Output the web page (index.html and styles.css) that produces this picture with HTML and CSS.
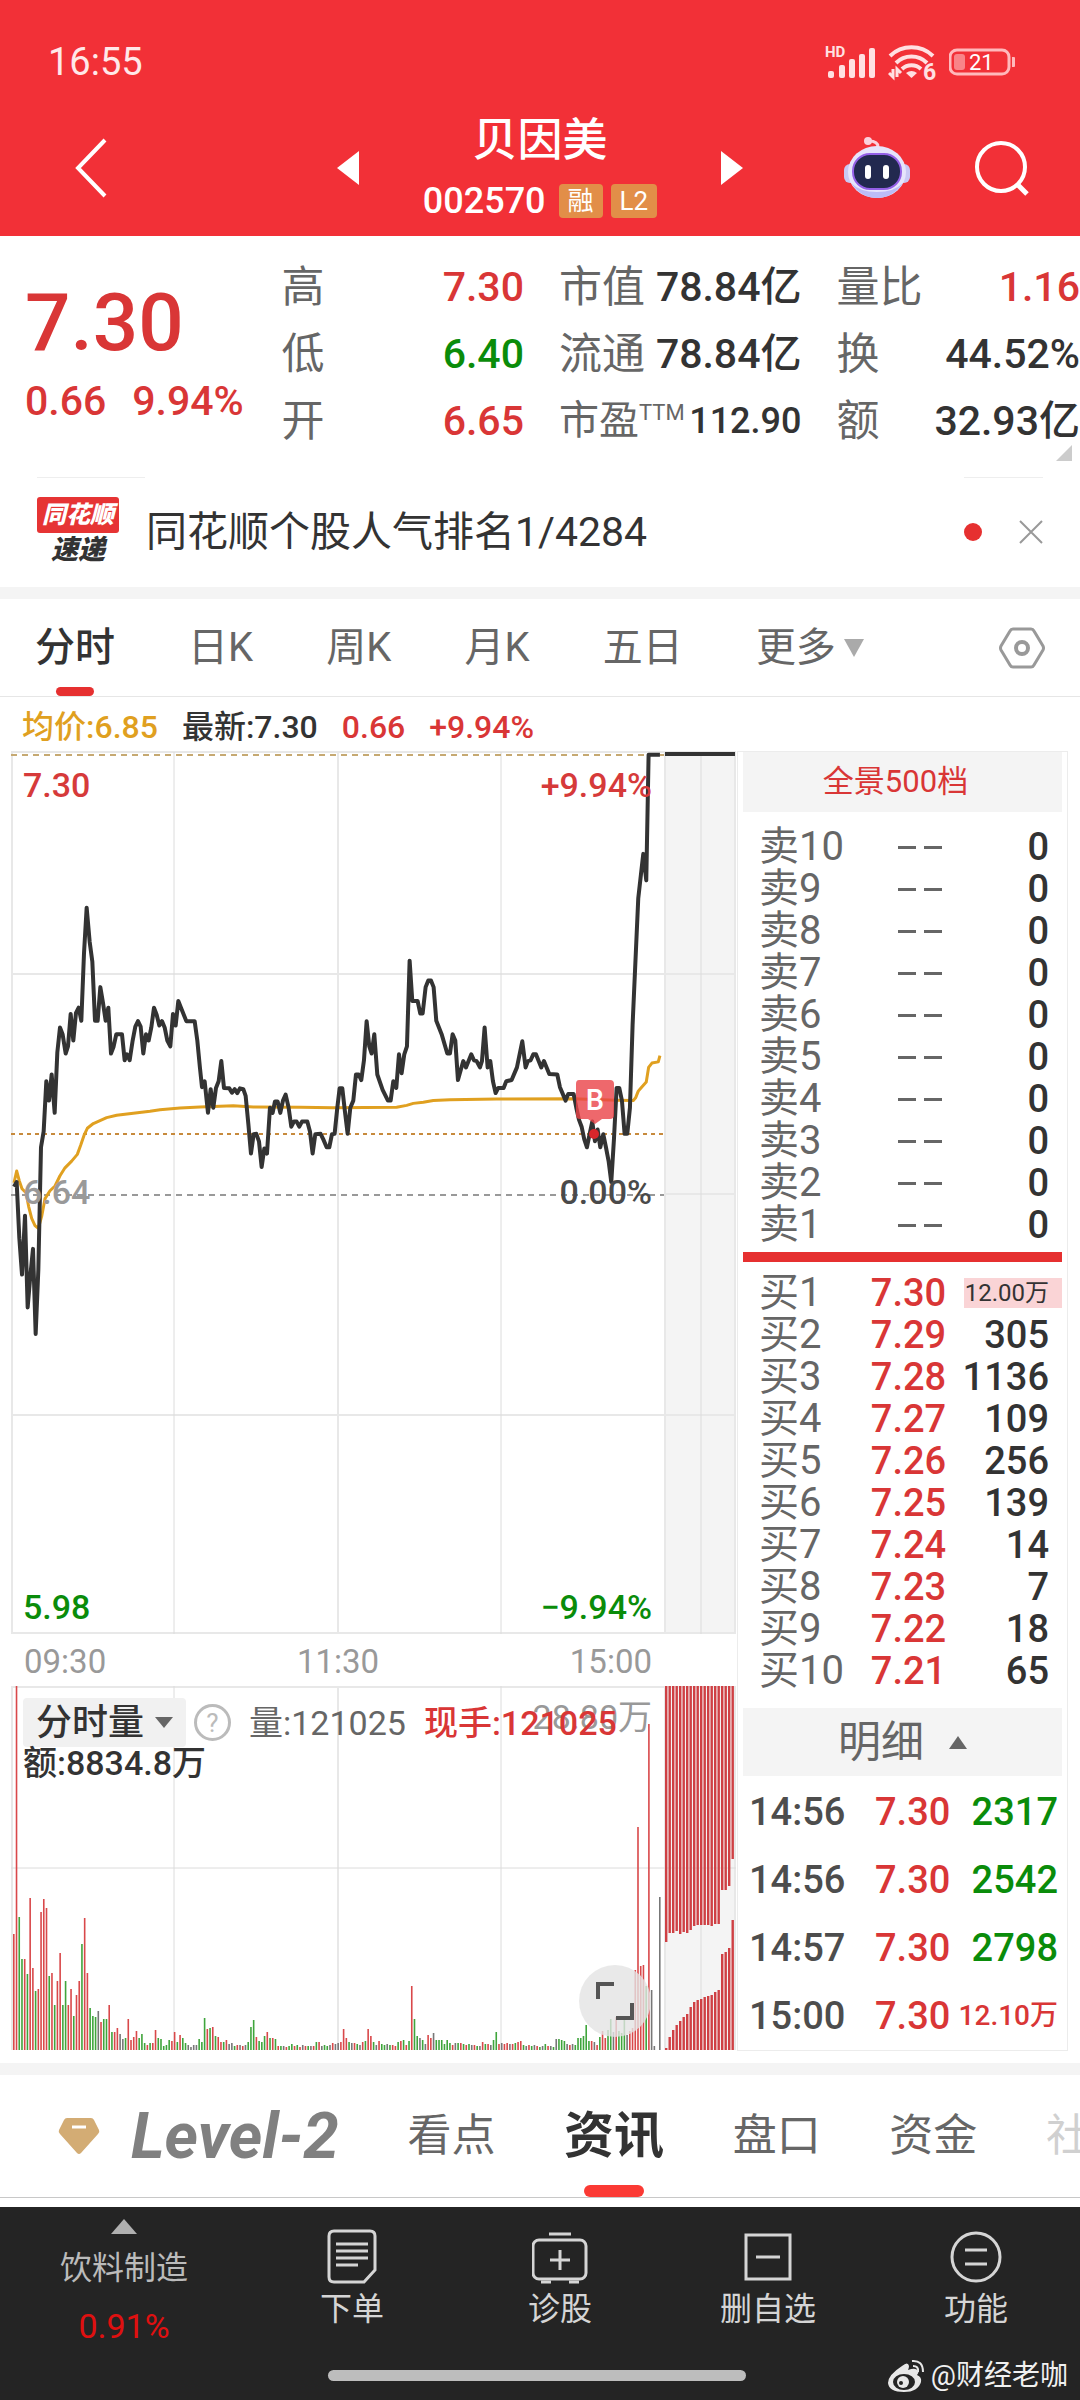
FILE: index.html
```html
<!DOCTYPE html>
<html lang="zh-CN">
<head>
    <meta charset="UTF-8">
    <meta name="viewport" content="width=device-width, initial-scale=1.0">
    <title>贝因美 002570</title>
    <link rel="stylesheet" href="styles.css">
</head>
<body>
    <header class="top">
        <div class="status-bar">
            <span class="clock">16:55</span>
            <div class="status-icons">
                <svg width="52" height="44" viewBox="0 -5 52 44" fill="#ffe0e2">
                    <text x="0" y="12" font-size="15" font-weight="700">HD</text>
                    <rect x="3" y="26" width="6" height="7" rx="2"/>
                    <rect x="14" y="20" width="6" height="13" rx="2"/>
                    <rect x="24" y="14" width="6" height="19" rx="2"/>
                    <rect x="34" y="9" width="6" height="24" rx="2"/>
                    <rect x="44" y="3" width="6" height="30" rx="2"/>
                </svg>
                <svg width="50" height="52" viewBox="0 -6 50 52" fill="none" stroke="#ffe0e2" stroke-width="4">
                    <path d="M2 14a31 31 0 0 1 43 0M8 21a22 22 0 0 1 31 0M14 27a14 14 0 0 1 19 0"/>
                    <path d="M18 31q5.500-4 11 0l-5.500 5z" fill="#ffe0e2" stroke="none"/>
                    <path d="M1 31l4 4v-8M9 35v-8l4 4" stroke-width="3"/>
                    <text x="35" y="38" font-size="23" font-weight="700" fill="#ffe0e2" stroke="none">6</text>
                </svg>
                <svg width="67" height="28" viewBox="0 0 67 28">
                    <rect x="1" y="2" width="59" height="24" rx="7" fill="none" stroke="#ffb9bc" stroke-width="3"/>
                    <rect x="5" y="6" width="11" height="16" rx="3" fill="#f98488"/>
                    <path d="M63 9v10h2q1 0 1-1v-8q0-1-1-1z" fill="#ffb9bc"/>
                    <text x="20" y="22" font-size="22" fill="#fff">21</text>
                </svg>
            </div>
        </div>
        <div class="title-bar">
            <div class="title-left">
                <a href="#" class="icon-link" aria-label="返回">
                    <svg width="34" height="62" viewBox="0 0 34 62" fill="none" stroke="#fff" stroke-width="4"><path d="M31 3L4 31l27 28"/></svg>
                </a>
            </div>
            <button class="arrow-btn" aria-label="上一只"><svg width="22" height="34" viewBox="0 0 22 34"><path d="M22 0v34L0 17z" fill="#fff"/></svg></button>
            <div class="stock">
                <h1>贝因美</h1>
                <div class="code-row">
                    <span class="code">002570</span>
                    <span class="tag">融</span>
                    <span class="tag">L2</span>
                </div>
            </div>
            <button class="arrow-btn" aria-label="下一只"><svg width="22" height="34" viewBox="0 0 22 34"><path d="M0 0v34l22-17z" fill="#fff"/></svg></button>
            <div class="title-right">
                <button aria-label="智能助手">
                    <svg width="66" height="62" viewBox="0 0 66 62">
                        <path d="M34 10q0-6-9-6" fill="none" stroke="#fbd0dc" stroke-width="3"/>
                        <circle cx="24" cy="4" r="4" fill="#fbd0dc"/>
                        <rect x="0" y="27" width="12" height="19" rx="6" fill="#c9c8f4"/>
                        <rect x="54" y="27" width="12" height="19" rx="6" fill="#c9c8f4"/>
                        <ellipse cx="33" cy="35" rx="29" ry="26" fill="#e6e4fb"/>
                        <path d="M7 46q10 15 26 15t26-15q-9 9-26 9T7 46z" fill="#bcbcf6"/>
                        <rect x="9" y="17" width="48" height="35" rx="17" fill="#22294f" stroke="#9460e6" stroke-width="2"/>
                        <rect x="21" y="28" width="6" height="14" rx="3" fill="#fff"/>
                        <rect x="39" y="28" width="6" height="14" rx="3" fill="#fff"/>
                    </svg>
                </button>
                <button aria-label="搜索">
                    <svg width="56" height="56" viewBox="0 0 56 56" fill="none" stroke="#fff" stroke-width="4"><circle cx="27" cy="27" r="24"/><path d="M43 44l10 10" stroke-width="5"/></svg>
                </button>
            </div>
        </div>
    </header>

    <section class="quote">
        <div class="price-box red">
            <div class="price">7.30</div>
            <div class="change"><span>0.66</span><span>9.94%</span></div>
        </div>
        <dl class="stats">
            <div><dt>高</dt><dd class="red">7.30</dd></div>
            <div><dt>低</dt><dd class="green">6.40</dd></div>
            <div><dt>开</dt><dd class="red">6.65</dd></div>
        </dl>
        <dl class="stats">
            <div><dt>市值</dt><dd>78.84亿</dd></div>
            <div><dt>流通</dt><dd>78.84亿</dd></div>
            <div class="pe"><dt>市盈<sup>TTM</sup></dt><dd>112.90</dd></div>
        </dl>
        <dl class="stats">
            <div><dt>量比</dt><dd class="red">1.16</dd></div>
            <div><dt>换</dt><dd>44.52%</dd></div>
            <div><dt>额</dt><dd>32.93亿</dd></div>
        </dl>
        <span class="corner"></span>
    </section>

    <section class="news">
        <div class="news-logo"><b>同花顺</b><i>速递</i></div>
        <a href="#" class="news-text">同花顺个股人气排名1/4284</a>
        <span class="dot"></span>
        <button aria-label="关闭"><svg width="24" height="24" viewBox="0 0 24 24" stroke="#999" stroke-width="2"><path d="M1 1l22 22M23 1L1 23"/></svg></button>
    </section>

    <nav class="period">
        <a href="#" class="active">分时</a>
        <a href="#">日K</a>
        <a href="#">周K</a>
        <a href="#">月K</a>
        <a href="#">五日</a>
        <a href="#" class="more">更多<svg width="20" height="20" viewBox="0 0 20 20"><path d="M0 1h20L10 19z" fill="#aaa"/></svg></a>
        <button aria-label="设置">
            <svg width="46" height="46" viewBox="0 0 46 46" fill="none" stroke="#999" stroke-width="3"><path d="M14 4h18q2 0 3 2l9 15q1 2 0 4l-9 15q-1 2-3 2H14q-2 0-3-2L2 25q-1-2 0-4l9-15q1-2 3-2z"/><circle cx="23" cy="23" r="6" stroke-width="4"/></svg>
        </button>
    </nav>

    <div class="info">
        <span class="gold">均价:6.85</span>
        <span>最新:7.30</span>
        <span class="red">0.66</span>
        <span class="red">+9.94%</span>
    </div>

    <main class="board">
        <div class="charts">
            <svg class="price-chart" viewBox="0 751 737 884">
                <rect x="664" y="752" width="72" height="881" fill="#f4f4f4"/>
                <path d="M11 752H736M12 752V1634M338 752V1634M11 974H736M11 1415H736M11 1633H736M665 752V1634M735 752V1634M664 1194H736" fill="none" stroke="#e8e8e8" stroke-width="2"/>
                <path d="M174 752V1634M501 752V1634M701 752V1634" fill="none" stroke="#dcdcdc"/>
                <path d="M11 755H664" stroke="#c6a972" stroke-width="2" stroke-dasharray="6 5"/>
                <path d="M11 1134H664" stroke="#c78a3c" stroke-width="2" stroke-dasharray="4 4"/>
                <path d="M11 1195H664" stroke="#999" stroke-width="2" stroke-dasharray="6 5"/>
                <g transform="translate(0 740) scale(0.3333 0.3954)" fill="none" stroke-linejoin="round">
                    <polyline class="avg-line" points="42,1120 50,1090 58,1115 66,1135 78,1145 86,1180 95,1210 105,1228 115,1235 125,1205 135,1160 150,1140 165,1128 180,1102 195,1082 215,1065 232,1048 242,1025 252,1000 262,982 280,970 320,955 350,949 400,944 450,939 480,935 540,931 600,928 700,925 760,928 900,929 1000,930 1190,929 1220,924 1240,919 1270,916 1300,912 1350,910 1490,908 1720,907 1850,911 1900,912 1907,905 1915,888 1925,878 1939,865 1946,828 1956,817 1975,814 1980,798"/>
                    <polyline class="price-line" points="42,1130 50,1118 58,1260 66,1352 75,1203 83,1435 91,1355 99,1287 107,1502 115,1340 123,1030 131,990 139,863 147,912 155,846 164,943 172,790 180,727 188,745 197,793 204,775 212,693 220,760 228,690 236,677 244,710 252,540 260,424 269,510 277,560 285,710 293,710 301,625 309,665 317,710 325,677 333,793 341,775 349,744 366,744 374,810 381,795 389,810 398,760 406,725 414,711 422,725 430,793 438,744 446,760 454,727 462,677 470,695 478,722 486,711 494,727 502,760 511,775 519,693 527,722 535,660 543,677 559,711 584,711 592,760 600,830 606,878 614,863 624,943 632,883 640,930 648,880 656,863 664,812 672,880 688,881 696,892 704,883 712,893 720,881 730,883 737,900 745,970 753,1046 761,997 769,996 777,1015 785,1080 793,1033 801,1046 810,930 818,943 825,914 833,914 841,943 849,912 857,897 866,930 874,978 882,965 890,965 898,978 906,965 922,965 930,990 938,1046 946,997 962,996 970,1010 980,1030 988,1030 996,997 1004,996 1012,930 1019,881 1027,881 1035,940 1043,996 1051,930 1060,912 1068,846 1076,846 1084,860 1092,810 1100,711 1108,775 1115,793 1123,744 1132,846 1148,885 1164,912 1172,912 1180,863 1189,880 1197,795 1205,843 1213,795 1221,775 1229,558 1237,660 1253,660 1261,692 1268,692 1277,625 1285,608 1293,608 1301,625 1309,710 1325,744 1342,793 1350,793 1358,744 1366,760 1374,860 1390,812 1398,828 1414,795 1422,810 1430,812 1440,828 1446,812 1454,727 1463,828 1471,812 1479,863 1487,893 1495,880 1511,880 1519,863 1535,860 1551,828 1567,762 1577,828 1584,812 1592,810 1600,795 1608,795 1624,828 1632,812 1648,845 1672,846 1680,878 1697,912 1705,895 1721,895 1729,930 1737,960 1745,978 1753,1010 1761,1030 1769,997 1777,965 1785,1015 1793,985 1801,1030 1810,997 1818,1030 1826,1065 1834,1118 1842,1010 1850,880 1858,880 1866,912 1874,996 1882,996 1890,930 1898,720 1915,400 1923,340 1930,288 1939,355 1946,37 1980,37"/>
                </g>
                <path d="M665 754H735" stroke="#333" stroke-width="4"/>
                <path d="M579 1080h31q4 0 4 4v31q0 4-4 4h-8l-7 5-7-5h-8q-4 0-4-4v-31q0-4 3-4z" fill="#ea4247" opacity=".8"/>
                <text x="595" y="1110" class="buy-mark">B</text>
                <circle cx="594" cy="1134" r="5" fill="#d8262b"/>
                <text x="23" y="797" fill="#d63a3a">7.30</text>
                <text x="652" y="797" fill="#d63a3a" class="end">+9.94%</text>
                <text x="23" y="1204" fill="#999">6.64</text>
                <text x="652" y="1204" fill="#4a4a4a" class="end">0.00%</text>
                <text x="23" y="1619" fill="#0a8c0a">5.98</text>
                <text x="652" y="1619" fill="#0a8c0a" class="end">−9.94%</text>
            </svg>
            <div class="time-axis"><span>09:30</span><span>11:30</span><span>15:00</span></div>
            <div class="volume">
                <svg id="volume-chart" viewBox="0 1684 737 366">
                    <rect x="664" y="1685" width="72" height="364" fill="#f4f4f4"/>
                    <path d="M11 1686H736M12 1685V2049M338 1685V2049M665 1685V2049M735 1685V2049" fill="none" stroke="#e8e8e8" stroke-width="2"/>
                    <path d="M174 1685V2049M501 1685V2049M701 1685V2049M11 1867H736" fill="none" stroke="#dcdcdc"/>
                    <g id="bars"></g>
                    <text x="652" y="1728" fill="#999" class="end top-volume">28.80万</text>
                </svg>
                <div class="legend">
                    <label class="indicator">
                        <select aria-label="指标"><option>分时量</option></select>
                        <svg width="18" height="11" viewBox="0 0 18 11"><path d="M0 0h18L9 11z" fill="#666"/></svg>
                    </label>
                    <button class="help" aria-label="说明">?</button>
                    <span class="gray">量:121025</span>
                    <span class="red now">现手:121025</span>
                    <span class="amount">额:8834.8万</span>
                </div>
                <button class="expand" aria-label="全屏"><svg width="38" height="38" viewBox="0 0 38 38" fill="none" stroke="#555" stroke-width="4"><path d="M2 17V2h16M36 21v15H20"/></svg></button>
            </div>
        </div>

        <aside class="depth">
            <a href="#" class="depth-title">全景500档</a>
            <table class="book" id="sell"></table>
            <div class="divider"></div>
            <table class="book" id="buy"></table>
            <button class="detail">明细<svg width="18" height="13" viewBox="0 0 18 13"><path d="M9 0l9 13H0z" fill="#666"/></svg></button>
            <table class="trades">
                <tr><td>14:56</td><td class="red">7.30</td><td class="green">2317</td></tr>
                <tr><td>14:56</td><td class="red">7.30</td><td class="green">2542</td></tr>
                <tr><td>14:57</td><td class="red">7.30</td><td class="green">2798</td></tr>
                <tr><td>15:00</td><td class="red">7.30</td><td class="red small">12.10万</td></tr>
            </table>
        </aside>
    </main>

    <nav class="sections">
        <a href="#" class="level2">
            <svg width="42" height="38" viewBox="0 0 42 38"><path d="M9 1h24q2 0 3 2l5 10q1 2-1 4L23 36q-2 2-4 0L2 17q-2-2-1-4L6 3q1-2 3-2z" fill="#d3ac74"/><path d="M14 10h14" stroke="#fff" stroke-width="3"/></svg>
            <span>Level-2</span>
        </a>
        <a href="#">看点</a>
        <a href="#" class="active">资讯</a>
        <a href="#">盘口</a>
        <a href="#">资金</a>
        <a href="#" class="faded">社</a>
    </nav>

    <footer class="toolbar">
        <a href="#" class="industry">
            <svg width="26" height="15" viewBox="0 0 26 15"><path d="M13 0l13 15H0z" fill="#b0b0b0"/></svg>
            <span>饮料制造</span>
            <strong>0.91%</strong>
        </a>
        <a href="#">
            <svg width="56" height="56" viewBox="0 0 56 56" fill="none" stroke="#d5d5d5" stroke-width="3"><path d="M10 2h36q5 0 5 5v34L40 53H10q-5 0-5-5V7q0-5 5-5z"/><path d="M12 15h32M12 22h32M12 29h32M12 36h22"/></svg>
            <span>下单</span>
        </a>
        <a href="#">
            <svg width="56" height="56" viewBox="0 0 56 56" fill="none" stroke="#d5d5d5" stroke-width="3"><rect x="1" y="11" width="53" height="39" rx="6"/><path d="M17 5h22M28 21v20M18 31h20M9 53h10M37 53h10"/></svg>
            <span>诊股</span>
        </a>
        <a href="#">
            <svg width="56" height="56" viewBox="0 0 56 56" fill="none" stroke="#d5d5d5" stroke-width="3"><rect x="6" y="6" width="44" height="44"/><path d="M16 28h24"/></svg>
            <span>删自选</span>
        </a>
        <a href="#">
            <svg width="56" height="56" viewBox="0 0 56 56" fill="none" stroke="#d5d5d5" stroke-width="3"><circle cx="28" cy="28" r="24"/><path d="M17 21h22M17 35h22"/></svg>
            <span>功能</span>
        </a>
        <div class="home-bar"></div>
        <div class="watermark">
            <svg width="38" height="34" viewBox="0 0 38 34">
                <path d="M15 7q6-5 7 0 0 2-1 4 8-3 10 1 1 2-1 4 5 2 4 7-3 10-17 10Q2 33 1 24q0-8 14-17z" fill="#e8e8e8"/>
                <ellipse cx="17" cy="23" rx="11" ry="8" fill="#242424"/>
                <circle cx="16" cy="23" r="6" fill="#e8e8e8"/><circle cx="14" cy="24" r="2" fill="#242424"/>
                <path d="M25 2q11-1 11 11M26 7q6 0 5 6" fill="none" stroke="#e8e8e8" stroke-width="2"/>
            </svg>
            <span>@财经老咖</span>
        </div>
    </footer>
    <script src="script.js"></script>
</body>
</html>
```
FILE: styles.css
```css
* {
    box-sizing: border-box;
}
body {
    margin: 0;
    background: #fff;
    color: #333;
    font-family: Roboto, "Noto Sans CJK SC", sans-serif;
    font-size: 34px;
    line-height: 40px;
    overflow-x: hidden;
}
a {
    color: inherit;
    text-decoration: none;
}
button {
    display: flex;
    align-items: center;
    justify-content: center;
    padding: 0;
    border: none;
    background: none;
    color: inherit;
    font: inherit;
    cursor: pointer;
}
svg {
    display: block;
    flex-shrink: 0;
}
h1, dl, dd {
    margin: 0;
}
.red {
    color: #d93636;
}
.green {
    color: #0a8c0a;
}
.gold {
    color: #e0a020;
}
.gray {
    color: #666;
}

/* header */
.top {
    background: #f23037;
    color: #fff;
}
.status-bar {
    display: flex;
    justify-content: space-between;
    align-items: center;
    height: 110px;
    padding: 14px 64px 0 48px;
}
.clock {
    font-size: 38px;
    color: #ffe8e9;
}
.status-icons {
    display: flex;
    align-items: center;
    gap: 11px;
}
.title-bar {
    display: grid;
    grid-template-columns: 1fr auto auto auto 1fr;
    align-items: center;
    padding-bottom: 10px;
}
.title-left, .title-right {
    display: flex;
    align-items: center;
}
.title-left {
    padding-left: 74px;
}
.title-right {
    justify-content: flex-end;
    gap: 64px;
    padding-right: 50px;
}
.stock {
    width: 362px;
    text-align: center;
}
.stock h1 {
    font-size: 45px;
    line-height: 62px;
    font-weight: 500;
}
.code-row {
    display: flex;
    align-items: center;
    justify-content: center;
    gap: 8px;
    height: 54px;
    padding-top: 4px;
}
.code {
    font-size: 36px;
    font-weight: 500;
    margin-right: 5px;
}
.tag {
    padding: 0 9px;
    border-radius: 4px;
    background: #e28e48;
    font-size: 26px;
    line-height: 34px;
}

/* quote */
.quote {
    position: relative;
    display: grid;
    grid-template-columns: 221fr 242fr 242fr 243fr;
    column-gap: 35px;
    padding: 17px 0 7px 25px;
}
.price-box {
    padding-top: 30px;
    font-weight: 500;
    white-space: nowrap;
}
.price {
    font-size: 80px;
    line-height: 80px;
}
.change {
    display: flex;
    gap: 26px;
    padding-top: 18px;
    font-size: 41px;
}
.stats div {
    display: flex;
    justify-content: space-between;
    align-items: center;
    height: 67px;
    white-space: nowrap;
}
.stats dt {
    font-size: 43px;
    line-height: 66px;
    color: #666;
}
.stats dd {
    font-size: 41px;
    font-weight: 500;
}
.stats .pe dt {
    font-size: 40px;
}
.stats .pe dd {
    font-size: 36px;
}
.pe sup {
    font-size: 22px;
    line-height: 0;
}
.corner {
    position: absolute;
    right: 8px;
    bottom: 0;
    border-left: 16px solid transparent;
    border-bottom: 16px solid #ccc;
}

/* news */
.news {
    display: flex;
    align-items: center;
    height: 138px;
    padding: 16px 37px 0;
    border-bottom: 12px solid #f4f4f4;
    background: linear-gradient(#eee, #eee) 37px 16px / 108px 1px no-repeat,
        linear-gradient(#eee, #eee) right 37px top 16px / 79px 1px no-repeat;
}
.news-logo {
    width: 82px;
    margin-right: 27px;
    text-align: center;
    font-weight: 900;
    font-style: italic;
}
.news-logo b {
    display: block;
    border-radius: 3px;
    background: #e63434;
    color: #fff;
    font-size: 24px;
    line-height: 36px;
    white-space: nowrap;
}
.news-logo i {
    display: block;
    font-size: 27px;
    line-height: 34px;
}
.news-text {
    flex: 1;
    font-size: 41px;
    white-space: nowrap;
}
.dot {
    width: 18px;
    height: 18px;
    margin-right: 37px;
    border-radius: 50%;
    background: #e63030;
}

/* period tabs */
.period {
    display: flex;
    justify-content: space-between;
    align-items: center;
    height: 98px;
    padding: 0 35px;
    border-bottom: 1px solid #e6e6e6;
    font-size: 40px;
    color: #666;
}
.period a {
    position: relative;
    line-height: 97px;
}
.period .active {
    color: #333;
    font-weight: 500;
}
.active::after {
    content: "";
    position: absolute;
    left: 50%;
    bottom: 0;
    width: 38px;
    height: 9px;
    margin-left: -19px;
    border-radius: 5px;
    background: #e63030;
}
.more {
    display: flex;
    align-items: center;
    gap: 8px;
    margin-right: 62px;
}
.info {
    display: flex;
    gap: 24px;
    padding: 10px 22px 4px;
    font-size: 32px;
    font-weight: 500;
}

/* charts */
.board {
    display: grid;
    grid-template-columns: 737fr 343fr;
}
.charts svg text {
    font-size: 34px;
    font-weight: 500;
}
.charts svg .end {
    text-anchor: end;
}
.charts svg .buy-mark {
    font-size: 29px;
    fill: #fff;
    text-anchor: middle;
}
.charts svg .top-volume {
    font-weight: 400;
}
.price-chart, #volume-chart {
    width: 100%;
}
.price-line, .avg-line {
    stroke: #333;
    stroke-width: 4px;
    vector-effect: non-scaling-stroke;
}
.avg-line {
    stroke: #e0a020;
    stroke-width: 3px;
}
.time-axis {
    display: flex;
    justify-content: space-between;
    padding: 7px 85px 3px 24px;
    font-size: 33px;
    color: #999;
}
.volume {
    position: relative;
}
.legend {
    position: absolute;
    top: 13px;
    left: 23px;
    display: grid;
    grid-template-columns: auto auto auto auto;
    column-gap: 18px;
    align-items: center;
    white-space: nowrap;
}
.indicator {
    display: flex;
    align-items: center;
    height: 49px;
    margin-right: -10px;
    padding: 0 13px;
    border-radius: 4px;
    background: #f1f1f1;
}
.indicator select {
    appearance: none;
    padding: 0;
    margin-right: 10px;
    border: none;
    background: none;
    color: #333;
    font: inherit;
    font-size: 36px;
    font-weight: 500;
}
.help {
    width: 37px;
    height: 37px;
    border: 3px solid #bbb;
    border-radius: 50%;
    color: #bbb;
    font-size: 26px;
}
.now, .amount {
    font-weight: 500;
}
.amount {
    grid-column: 1 / -1;
    line-height: 32px;
}
.expand {
    position: absolute;
    right: 86px;
    bottom: 14px;
    width: 72px;
    height: 72px;
    border-radius: 50%;
    background: rgba(228, 228, 228, 0.8);
}

/* order book */
.depth {
    border: 1px solid #ececec;
    margin-right: 12px;
    padding: 0 5px;
}
.depth-title {
    display: block;
    padding-right: 14px;
    background: #f4f4f4;
    color: #d93636;
    font-size: 31px;
    line-height: 60px;
    text-align: center;
}
table {
    width: 100%;
    border-collapse: collapse;
    table-layout: fixed;
}
td {
    padding: 0;
    white-space: nowrap;
}
.book {
    margin: 14px 0 6px;
    font-size: 38px;
}
#buy {
    margin: 10px 0 16px;
}
.book td {
    height: 42px;
    line-height: 42px;
}
.book td:first-child {
    width: 33%;
    padding-left: 16px;
    color: #666;
    font-size: 40px;
}
.book td:nth-child(2) {
    width: 31%;
    padding-right: 1px;
    text-align: right;
}
.book td:last-child {
    padding-right: 13px;
    text-align: right;
}
.book .red, .book td:last-child {
    font-weight: 500;
}
.dash i {
    display: inline-block;
    width: 18px;
    height: 3px;
    margin: 0 4px 11px;
    background: #666;
}
.book td.big {
    background: linear-gradient(#fad4d6, #fad4d6) right 6px / 98px 30px no-repeat;
    font-size: 24px;
    font-weight: 400;
}
.divider {
    height: 10px;
    background: #e63030;
}
.detail {
    gap: 25px;
    width: 100%;
    height: 68px;
    background: #f4f4f4;
    color: #666;
    font-size: 43px;
}
.trades {
    margin-top: 2px;
    font-size: 38px;
    font-weight: 500;
}
.trades td {
    height: 68px;
    text-align: right;
}
.trades td:first-child {
    width: 33%;
    padding-left: 6px;
    text-align: left;
    color: #4d4d4d;
}
.trades td:nth-child(2) {
    width: 32%;
}
.trades td:last-child {
    padding-right: 4px;
}
.trades .small {
    font-size: 28px;
}

/* bottom tabs */
.sections {
    display: flex;
    justify-content: space-between;
    align-items: center;
    height: 135px;
    margin-top: 12px;
    padding-left: 58px;
    border-top: 12px solid #f4f4f4;
    border-bottom: 1px solid #c8c8c8;
    font-size: 44px;
    color: #666;
    white-space: nowrap;
    overflow: hidden;
}
.sections a {
    position: relative;
    line-height: 121px;
}
.sections .level2 {
    display: flex;
    align-items: center;
    gap: 31px;
    font-size: 64px;
    font-style: italic;
    font-weight: 700;
    color: #808080;
}
.sections .active {
    color: #333;
    font-size: 50px;
    font-weight: 700;
}
.sections .active::after {
    width: 60px;
    height: 12px;
    margin-left: -30px;
    border-radius: 6px;
    background: #fb3a34;
}
.sections .faded {
    width: 34px;
    opacity: .3;
}

/* toolbar */
.toolbar {
    position: relative;
    display: grid;
    grid-template-columns: 248fr 208fr 208fr 208fr 208fr;
    height: 193px;
    margin-top: 9px;
    background: #242424;
    color: #d5d5d5;
    font-size: 32px;
}
.toolbar a {
    display: flex;
    flex-direction: column;
    align-items: center;
    padding-top: 22px;
    gap: 4px;
}
.toolbar .industry {
    padding-top: 12px;
    gap: 14px;
    color: #bbb;
}
.industry strong {
    color: #e01010;
    font-size: 34px;
    font-weight: 400;
    margin-top: 4px;
}
.home-bar {
    position: absolute;
    left: 50%;
    bottom: 19px;
    width: 418px;
    height: 11px;
    margin-left: -212px;
    border-radius: 6px;
    background: #bdbdbd;
}
.watermark {
    position: absolute;
    right: 12px;
    bottom: 4px;
    display: flex;
    align-items: center;
    gap: 6px;
    color: #f0f0f0;
    font-size: 28px;
}
```
FILE: script.js
```js
// order book
const sell = document.getElementById('sell');
for (let i = 10; i >= 1; i--) {
    sell.innerHTML += `<tr><td>卖${i}</td><td class="dash"><i></i><i></i></td><td>0</td></tr>`;
}

const buy = document.getElementById('buy');
const lots = ['12.00万', 305, 1136, 109, 256, 139, 14, 7, 18, 65];
lots.forEach((lot, i) => {
    const price = (7.30 - i * 0.01).toFixed(2);
    buy.innerHTML += `<tr><td>买${i + 1}</td><td class="red">${price}</td><td class="${i === 0 ? 'big' : ''}">${lot}</td></tr>`;
});

// volume per minute: r = up, g = down, k = flat
const volume = ('r116 r364 g133 g91 r91 g76 r152 r82 g59 r61 r138 r151 r142 g74 r77 g45 r69 r97 g45 g69 r45 r61 g34 r55 r69 g106 r132 r77 g42 g34 ' +
    'g33 k39 r28 g31 g31 r45 g18 r18 r22 k16 k11 g12 r31 r10 r13 r19 g12 g16 g7 r5 g7 r7 r20 g12 g11 g4 g5 g10 r9 r18 ' +
    'g8 r15 g12 g7 k5 k3 k5 k5 g11 g8 g32 r21 g22 r23 g14 r13 r8 g8 r10 k6 k7 g4 r5 k5 r4 k5 g8 g23 g30 r13 ' +
    'g9 g8 g14 r18 g12 r12 g11 r4 g4 k4 r3 g4 g6 r4 g5 r3 k5 r4 g4 k4 r4 g8 r8 k4 g5 g4 k5 r7 k6 k7 ' +
    'r8 r21 r12 g8 k7 r7 g6 k5 r8 g9 r21 r14 g8 k5 r9 g6 g5 k6 g5 r5 r4 g8 r9 g10 r5 g9 r64 g31 g14 ' +
    'k12 g10 k6 r15 r12 k17 g10 g10 g10 g6 g10 g7 r5 k7 g7 r7 g6 r5 g6 k5 r5 g4 k4 r8 g6 r6 k5 g10 g18 r6 ' +
    'k7 r6 r7 k6 r6 g7 r8 r9 g5 k4 r5 g4 k5 r4 g3 k4 g6 r4 k4 g3 k11 g11 g10 g9 k6 r5 k6 g5 g12 g12 ' +
    'g14 g25 g9 r9 k8 r5 g13 r19 r12 g20 g31 k18 r33 g19 g17 g32 k15 r19 r22 r80 r223 r84 r85 g64 r326 k60 k4 r0 k153').split(' ');
const colors = { r: '#d9484a', g: '#3fa53c', k: '#777' };
const bars = document.getElementById('bars');

function bar(x, y, width, height, color) {
    bars.innerHTML += `<rect x="${x}" y="${y}" width="${width}" height="${height}" fill="${color}"/>`;
}

const step = 646 / (volume.length - 1);
volume.forEach((item, i) => {
    const height = Number(item.slice(1));
    bar(13 + i * step, 2049 - height, 1.6, height, colors[item[0]]);
});

// after-hours session
const hanging = [256, 247, 247, 245, 248, 246, 247, 244, 240, 239, 239, 239, 239, 240, 238, 238, 204, 204, 200, 173];
const rising = [2, 13, 20, 25, 29, 33, 36, 43, 48, 50, 51, 53, 54, 55, 58, 60, 96, 98, 102, 130];
hanging.forEach((height, i) => {
    const x = 665 + i * 3.5;
    bar(x, 1685, 2.4, height, '#cf4044');
    bar(x, 2049 - rising[i], 2.4, rising[i], '#cf4044');
});
```
